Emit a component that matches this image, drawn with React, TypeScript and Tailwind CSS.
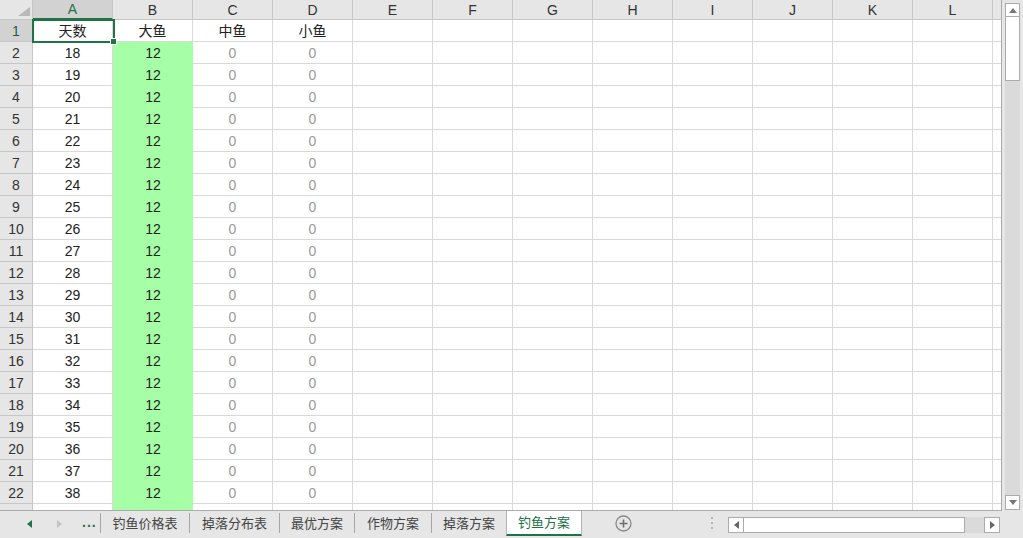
const COLS = ["A", "B", "C", "D", "E", "F", "G", "H", "I", "J", "K", "L"];

const TABS = [
  { name: "钓鱼价格表", w: "w-[89px]" },
  { name: "掉落分布表", w: "w-[90px]" },
  { name: "最优方案", w: "w-[75px]" },
  { name: "作物方案", w: "w-[77px]" },
  { name: "掉落方案", w: "w-[75px]" },
];

type Row = { n: number; cells: { text: string; kind?: "zero" | "green" }[] };

const rows: Row[] = [
  {
    n: 1,
    cells: [{ text: "天数" }, { text: "大鱼" }, { text: "中鱼" }, { text: "小鱼" }],
  },
];
for (let i = 2; i <= 23; i++) {
  rows.push({
    n: i,
    cells: [
      { text: String(i + 16) },
      { text: "12", kind: "green" },
      { text: "0", kind: "zero" },
      { text: "0", kind: "zero" },
    ],
  });
}

function Tri({ dir, color }: { dir: "up" | "down" | "left" | "right"; color: string }) {
  const pts = {
    up: "0,5 4,0 8,5",
    down: "0,0 8,0 4,5",
    left: "5,0 5,8 0,4",
    right: "0,0 0,8 5,4",
  }[dir];
  const w = dir === "up" || dir === "down" ? 8 : 5;
  const h = dir === "up" || dir === "down" ? 5 : 8;
  return (
    <svg width={w} height={h} viewBox={`0 0 ${w} ${h}`}>
      <polygon points={pts} fill={color} />
    </svg>
  );
}

function HeaderRow() {
  return (
    <div className="flex h-[20px] shrink-0">
      <div className="relative w-[33px] shrink-0 bg-[#e6e6e6] border-r border-b border-[#c6c6c6]">
        <svg className="absolute left-[18px] top-[7px]" width="12" height="9" viewBox="0 0 12 9">
          <polygon points="12,0 12,9 0,9" fill="#b9b9b9" />
        </svg>
      </div>
      {COLS.map((c) => (
        <div
          key={c}
          className={
            c === "A"
              ? "w-[80px] shrink-0 flex items-center justify-center bg-[#d2d2d2] text-[#217346] border-r border-[#c6c6c6] border-b-2 border-b-[#217346]"
              : "w-[80px] shrink-0 flex items-center justify-center bg-[#e6e6e6] text-[#333] border-r border-b border-[#c6c6c6]"
          }
        >
          {c}
        </div>
      ))}
      <div className="flex-1 bg-[#e6e6e6] border-b border-[#c6c6c6]" />
    </div>
  );
}

function BodyRow({ row }: { row: Row }) {
  return (
    <div className="flex h-[22px] shrink-0">
      <div
        className={
          row.n === 1
            ? "w-[33px] shrink-0 flex items-center justify-center bg-[#d2d2d2] text-[#1d5c3a] border-r border-b border-[#c6c6c6]"
            : "w-[33px] shrink-0 flex items-center justify-center bg-[#e6e6e6] text-[#333] border-r border-b border-[#c6c6c6]"
        }
      >
        {row.n}
      </div>
      {COLS.map((c, i) => {
        const cell = row.cells[i];
        if (cell?.kind === "green") {
          return (
            <div key={c} className="w-[80px] shrink-0 flex items-center justify-center bg-[#a6ffa6] text-[#222]">
              {cell.text}
            </div>
          );
        }
        return (
          <div
            key={c}
            className={
              cell?.kind === "zero"
                ? "w-[80px] shrink-0 flex items-center justify-center border-r border-b border-[#d9d9d9] text-[#9a9a9a]"
                : "w-[80px] shrink-0 flex items-center justify-center border-r border-b border-[#d9d9d9] text-[#222]"
            }
          >
            {cell?.text}
          </div>
        );
      })}
      <div className="flex-1 border-b border-[#d9d9d9]" />
    </div>
  );
}

export default function App() {
  return (
    <div className="w-[1023px] h-[538px] flex flex-col bg-[#e6e6e6] overflow-hidden font-['Liberation_Sans','Noto_Sans_CJK_SC',sans-serif] text-[14px] leading-none">
      {/* sheet + vertical scrollbar */}
      <div className="flex h-[511px] shrink-0">
        <div className="relative w-[1002px] shrink-0 flex flex-col overflow-hidden bg-white border-r border-b border-[#ababab]">
          <HeaderRow />
          {rows.map((r) => (
            <BodyRow key={r.n} row={r} />
          ))}
          {/* active cell A1 */}
          <div className="absolute left-[32px] top-[19px] w-[83px] h-[24px] border-2 border-[#217346]" />
          <div className="absolute left-[110px] top-[38px] w-[7px] h-[7px] bg-[#217346] border border-white" />
        </div>
        <div className="w-[21px] shrink-0 flex flex-col pl-[3px] pr-[3px] pt-[3px] pb-[1px]">
          <div className="h-[14px] bg-white border border-[#ababab] flex items-center justify-center">
            <Tri dir="up" color="#777" />
          </div>
          <div className="h-[64px] bg-white border-x border-b border-[#ababab]" />
          <div className="flex-1 bg-[#dadada]" />
          <div className="h-[15px] bg-white border border-[#ababab] flex items-center justify-center">
            <Tri dir="down" color="#777" />
          </div>
        </div>
      </div>

      {/* sheet tabs */}
      <div className="flex h-[27px] shrink-0 text-[13px] text-[#444]">
        <div className="w-[100px] shrink-0 flex items-center pl-[27px] pb-[2px]">
          <Tri dir="left" color="#217346" />
          <span className="ml-[25px]">
            <Tri dir="right" color="#c4c4c4" />
          </span>
          <span className="ml-[20px] text-[#217346] font-bold text-[14px] tracking-[1px] -mt-[4px]">...</span>
        </div>
        {TABS.map((t) => (
          <div key={t.name} className={`${t.w} shrink-0 flex items-center h-[24px]`}>
            <span className="w-px h-[20px] bg-[#a6a6a6]" />
            <span className="flex-1 text-center">{t.name}</span>
          </div>
        ))}
        <div className="w-[76px] shrink-0 h-[25px] flex items-center justify-center bg-white border-x border-[#b5b5b5] border-b-2 border-b-[#217346] text-[#217346]">
          钓鱼方案
        </div>
        <div className="ml-[33px] h-[24px] flex items-center">
          <svg width="17" height="17" viewBox="0 0 17 17">
            <circle cx="8.5" cy="8.5" r="7.5" fill="none" stroke="#8a8a8a" strokeWidth="1.3" />
            <path d="M8.5 4.5v8M4.5 8.5h8" stroke="#6e6e6e" strokeWidth="1.6" />
          </svg>
        </div>
        <div className="ml-[79px] h-[24px] flex flex-col justify-center gap-[3px]">
          <span className="w-[2px] h-[2px] bg-[#b5b5b5]" />
          <span className="w-[2px] h-[2px] bg-[#b5b5b5]" />
          <span className="w-[2px] h-[2px] bg-[#b5b5b5]" />
        </div>
        <div className="ml-[15px] mt-[6px] h-[16px] w-[272px] flex">
          <div className="w-[16px] bg-white border border-[#ababab] flex items-center justify-center">
            <Tri dir="left" color="#666" />
          </div>
          <div className="w-[221px] bg-white border-y border-r border-[#ababab]" />
          <div className="flex-1 bg-[#dadada]" />
          <div className="w-[16px] bg-white border border-[#ababab] flex items-center justify-center">
            <Tri dir="right" color="#666" />
          </div>
        </div>
      </div>
    </div>
  );
}
